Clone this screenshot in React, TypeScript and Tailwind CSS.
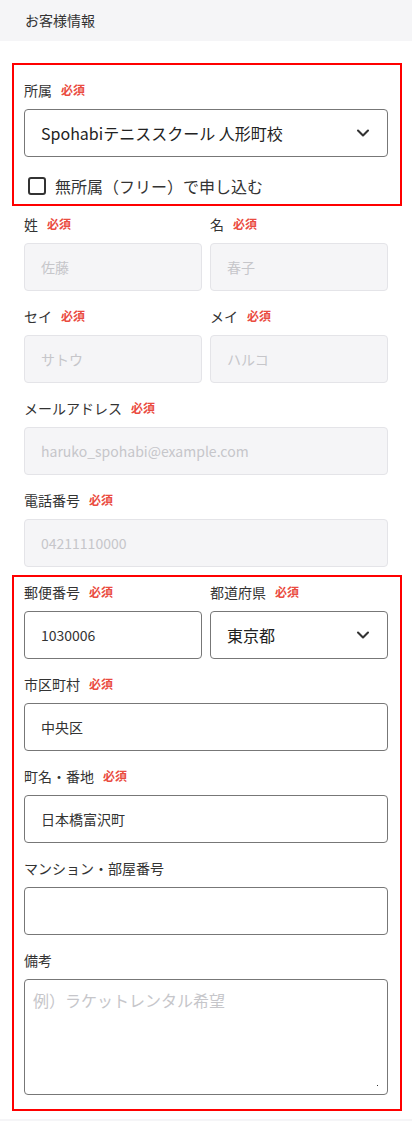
import { ChevronDown } from "lucide-react";

const font = { fontFamily: '"Noto Sans CJK JP", "Noto Sans", sans-serif' };

function Label({ text, required }: { text: string; required?: boolean }) {
  return (
    <div className="flex items-center h-[20px] mb-[9px] text-[14px] leading-[20px] text-[#333333]">
      <span>{text}</span>
      {required && (
        <span className="ml-[9px] text-[12px] font-bold text-[#ea4b40]">必須</span>
      )}
    </div>
  );
}

function LockedInput({ placeholder }: { placeholder: string }) {
  return (
    <input
      readOnly
      placeholder={placeholder}
      className="block w-full h-[48px] px-[16px] rounded-[4px] border border-[#e4e4e8] bg-[#f5f5f7] text-[14px] text-[#333] placeholder:text-[#c6c6ca] outline-none"
    />
  );
}

function TextInput({ value }: { value?: string }) {
  return (
    <input
      readOnly
      defaultValue={value}
      className="block w-full h-[48px] px-[16px] rounded-[4px] border border-[#777777] bg-white text-[14px] text-[#333] outline-none"
    />
  );
}

function SelectBox({ value }: { value: string }) {
  return (
    <div className="flex items-center justify-between w-full h-[48px] pl-[16px] pr-[14px] rounded-[4px] border border-[#777777] bg-white">
      <span className="text-[16px] text-[#222]">{value}</span>
      <ChevronDown size={20} strokeWidth={2.5} className="text-[#333]" />
    </div>
  );
}

export default function App() {
  return (
    <div className="min-h-screen bg-white" style={font}>
      <header className="h-[41px] bg-[#f5f5f7] flex items-center pl-[25px] text-[14px] text-[#333]">
        お客様情報
      </header>

      {/* 所属 */}
      <div className="mt-[22px] ml-[12px] mr-[10px] border-2 border-[#ff0000] pl-[10px] pr-[12px] pt-[15px] pb-[6px]">
        <Label text="所属" required />
        <SelectBox value="Spohabiテニススクール 人形町校" />
        <label className="mt-[17px] h-[24px] flex items-center pl-[4px]">
          <span className="w-[18px] h-[18px] border-2 border-[#333] rounded-[3px] bg-white" />
          <span className="ml-[9px] text-[16px] text-[#333]">無所属（フリー）で申し込む</span>
        </label>
      </div>

      <div className="px-[24px]">
        <div className="mt-[8px] grid grid-cols-2 gap-x-[8px]">
          <div>
            <Label text="姓" required />
            <LockedInput placeholder="佐藤" />
          </div>
          <div>
            <Label text="名" required />
            <LockedInput placeholder="春子" />
          </div>
        </div>
        <div className="mt-[15px] grid grid-cols-2 gap-x-[8px]">
          <div>
            <Label text="セイ" required />
            <LockedInput placeholder="サトウ" />
          </div>
          <div>
            <Label text="メイ" required />
            <LockedInput placeholder="ハルコ" />
          </div>
        </div>
        <div className="mt-[15px]">
          <Label text="メールアドレス" required />
          <LockedInput placeholder="haruko_spohabi@example.com" />
        </div>
        <div className="mt-[15px]">
          <Label text="電話番号" required />
          <LockedInput placeholder="04211110000" />
        </div>
      </div>

      {/* 住所 */}
      <div className="mt-[8px] ml-[12px] mr-[10px] border-2 border-[#ff0000] pl-[10px] pr-[12px] pt-[5px] pb-[14px]">
        <div className="grid grid-cols-2 gap-x-[8px]">
          <div>
            <Label text="郵便番号" required />
            <TextInput value="1030006" />
          </div>
          <div>
            <Label text="都道府県" required />
            <SelectBox value="東京都" />
          </div>
        </div>
        <div className="mt-[15px]">
          <Label text="市区町村" required />
          <TextInput value="中央区" />
        </div>
        <div className="mt-[15px]">
          <Label text="町名・番地" required />
          <TextInput value="日本橋富沢町" />
        </div>
        <div className="mt-[15px]">
          <Label text="マンション・部屋番号" />
          <TextInput />
        </div>
        <div className="mt-[15px]">
          <Label text="備考" />
          <div className="relative">
            <textarea
              readOnly
              placeholder="例）ラケットレンタル希望"
              className="block w-full h-[116px] px-[8px] pt-[8px] rounded-[4px] border border-[#777777] bg-white text-[16px] text-[#333] placeholder:text-[#c6c6ca] outline-none resize-none"
            />
            <span className="absolute right-[10px] bottom-[9px] w-[1px] h-[1px] bg-[#333]" />
          </div>
        </div>
      </div>

      <div className="mt-[8px] h-[10px] bg-[#f5f5f7]" />
    </div>
  );
}
